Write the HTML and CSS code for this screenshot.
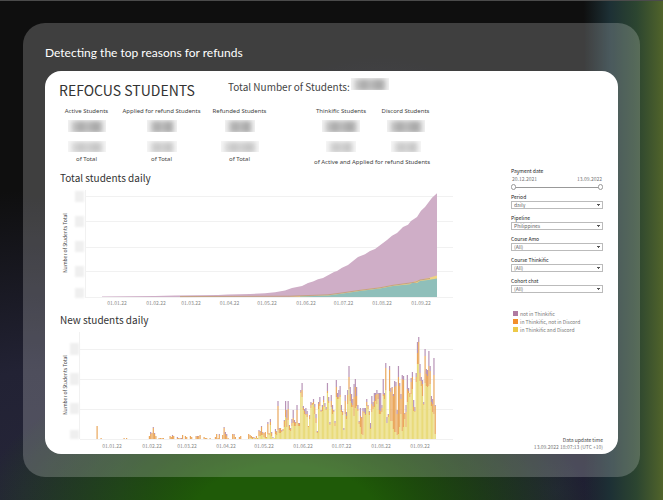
FILE: index.html
```html
<!DOCTYPE html>
<html lang="en">
<head>
<meta charset="utf-8">
<title>Detecting the top reasons for refunds</title>
<link rel="stylesheet" href="styles.css">
</head>
<body>
<main class="glass">
  <h1 class="caption">Detecting the top reasons for refunds</h1>
  <div class="card">
    <section class="report">
      <header class="head">
        <h2 class="name">REFOCUS STUDENTS</h2>
        <p class="total">Total Number of Students: <span class="mask mask-total"><i></i></span></p>
      </header>
      <div class="stats">
        <div class="stat"><h3>Active Students</h3><span class="mask wide"><i></i></span><span class="mask soft wide"><i></i></span><p>of Total</p></div>
        <div class="stat"><h3>Applied for refund Students</h3><span class="mask"><i></i></span><span class="mask soft"><i></i></span><p>of Total</p></div>
        <div class="stat"><h3>Refunded Students</h3><span class="mask"><i></i></span><span class="mask soft wide"><i></i></span><p>of Total</p></div>
        <div class="pair">
          <div class="stat"><h3>Thinkific Students</h3><span class="mask wide"><i></i></span><span class="mask soft"><i></i></span></div>
          <div class="stat"><h3>Discord Students</h3><span class="mask wide"><i></i></span><span class="mask soft"><i></i></span></div>
          <p>of Active and Applied for refund Students</p>
        </div>
      </div>
      <h3 class="chart-title">Total students daily</h3>
      <svg class="chart" viewBox="59 187 394 121" role="img" aria-label="Total students daily">
        <g class="smudge">
          <rect x="75" y="191" width="9" height="11"/><rect x="75" y="216" width="9" height="11"/><rect x="75" y="241" width="9" height="11"/><rect x="75" y="266" width="9" height="11"/><rect x="75" y="288" width="9" height="10"/>
        </g>
        <path class="grid" d="M85 196.500H453M85 221.500H453M85 247.500H453M85 271.500H453M85 297.500H453M85.500 190V297"/>
        <path class="area-not" d="M102 296.500L155 296L175 295.500L218 295L228 294.400L250 294L265 293.300L275 292.300L285 290.500L292 288L302 286L308 283L313 281.500L318 279.300L323 278L334 272L337 271L342 267.700L348 265L353 261L358 257L365 254.300L370 251L375 249L387 240L392 235.700L397 233L403 227L408 224.700L411 221L417 217L421 210.700L425 207L432 197.700L437 193.300V297H102Z"/>
        <path class="area-both" d="M290 296.500L328 295L343 293L360 290L380 287.500L393 285L410 283L416 281L420 280L430 277.500L437 275.500V297H290Z"/>
        <path class="edge" d="M180 296.600L290 296.200L328 294.800L343 292.800L360 290.300L380 287.800L393 285.300L410 283L416 282L420 280L430 278.500"/>
        <path class="area-teal" d="M300 296.500L328 295.500L343 293.500L360 291L380 288.500L393 286L410 284.300L412 283L417 283L420 281L428 280L437 278.500V297H300Z"/>
        <text class="axis" transform="translate(67 243) rotate(-90)">Number of Students Total</text>
        <g class="ticks">
          <text x="117" y="305">01.01.22</text><text x="156" y="305">01.02.22</text><text x="191" y="305">01.03.22</text><text x="229.500" y="305">01.04.22</text><text x="267" y="305">01.05.22</text><text x="306" y="305">01.06.22</text><text x="343.500" y="305">01.07.22</text><text x="382" y="305">01.08.22</text><text x="421" y="305">01.09.22</text>
        </g>
      </svg>
      <h3 class="chart-title">New students daily</h3>
      <svg class="chart" viewBox="59 329 394 121" role="img" aria-label="New students daily">
        <g class="smudge">
          <rect x="70" y="343" width="9" height="12"/><rect x="70" y="373" width="9" height="12"/><rect x="70" y="403" width="9" height="11"/><rect x="70" y="430" width="9" height="9"/>
        </g>
        <path class="grid" d="M80 349.500H453M80 379.500H453M80 409.500H453M80 439.500H453M79.500 332V439"/>
        <g id="bars"></g>
        <text class="axis" transform="translate(67 385) rotate(-90)">Number of Students Total</text>
        <g class="ticks">
          <text x="112" y="448">01.01.22</text><text x="152" y="448">01.02.22</text><text x="187" y="448">01.03.22</text><text x="226" y="448">01.04.22</text><text x="264" y="448">01.05.22</text><text x="303" y="448">01.06.22</text><text x="341.500" y="448">01.07.22</text><text x="381" y="448">01.08.22</text><text x="420" y="448">01.09.22</text>
        </g>
      </svg>
    </section>
    <aside class="side">
      <fieldset class="range">
        <legend>Payment date</legend>
        <div class="dates"><span>20.12.2021</span><span>13.09.2022</span></div>
        <div class="slider">
          <input type="range" min="0" max="267" value="0" aria-label="From date">
          <input type="range" min="0" max="267" value="267" aria-label="To date">
        </div>
      </fieldset>
      <div class="field"><label for="period">Period</label><select id="period"><option>daily</option></select></div>
      <div class="field"><label for="pipeline">Pipeline</label><select id="pipeline"><option>Philippines</option></select></div>
      <div class="field"><label for="amo">Course Amo</label><select id="amo"><option>(All)</option></select></div>
      <div class="field"><label for="thinkific">Course Thinkific</label><select id="thinkific"><option>(All)</option></select></div>
      <div class="field"><label for="cohort">Cohort chat</label><select id="cohort"><option>(All)</option></select></div>
      <ul class="legend">
        <li class="not">not in Thinkific</li>
        <li class="part">in Thinkific, not in Discord</li>
        <li class="both">in Thinkific and Discord</li>
      </ul>
      <footer class="updated"><b>Data update time</b><span>13.09.2022 18:07:13 (UTC +10)</span></footer>
    </aside>
  </div>
</main>
<script src="script.js"></script>
</body>
</html>
```
FILE: styles.css
```css
* { box-sizing: border-box; }
h1, h2, h3, p, ul, fieldset { margin: 0; padding: 0; border: 0; font-weight: 400; }
body {
  margin: 0;
  min-height: 100vh;
  padding: 22px 23px 23px;
  border-top: 1px solid #4b4b4b;
  border-bottom: 1px solid #77777c;
  font-family: "Noto Sans CJK SC", "Noto Sans", sans-serif;
  color: #444;
  background:
    linear-gradient(90deg, transparent 88%, #1d3035 92%, #2c4530 96%, #50632a 100%),
    radial-gradient(ellipse 46% 34% at 43% 103%, #1f5a08 0, #1f5a08 30%, transparent 100%),
    radial-gradient(ellipse 30% 38% at 84% 98%, #222238 0, transparent 100%),
    radial-gradient(ellipse 36% 60% at 4% 98%, #252538 0, #222234 40%, transparent 100%),
    radial-gradient(ellipse 28% 40% at 57% 50%, #232336 0, transparent 100%),
    #0f0f0f;
}
.glass {
  min-height: 453px;
  padding: 22px 22px 23px;
  border-radius: 22px;
  background: rgba(255, 255, 255, .2);
}
.caption {
  height: 26px;
  font: 400 12px/16px Lato, sans-serif;
  color: #fff;
}
.card {
  display: grid;
  grid-template-columns: 1fr 92px;
  column-gap: 58px;
  padding: 0 15px 0 14px;
  border-radius: 16px;
  background: #fff;
}
.report { padding-bottom: 1px; }
.head { display: grid; grid-template-columns: 169px 1fr; height: 36px; padding-top: 6px; }
.name { font-size: 14px; line-height: 26px; color: #333; white-space: nowrap; }
.total { display: flex; gap: 1px; font-size: 10px; line-height: 19px; white-space: nowrap; }
.mask { display: block; width: 30px; height: 12px; overflow: hidden; background: #f3f3f3; }
.mask i { display: block; height: 100%; margin: 1px 3px; background: linear-gradient(90deg, #d0d0d0, #aaa 30%, #bdbdbd 50%, #a6a6a6 80%, #c8c8c8); filter: blur(2px); }
.mask.wide { width: 38px; }
.mask.soft { height: 11px; margin-top: 9px; opacity: .65; }
.mask-total { width: 38px; margin-top: 1px; }
.stats { display: grid; grid-template-columns: 55px 95px 61px 130px; justify-content: start; height: 62px; }
.stat { display: flex; flex-direction: column; align-items: center; }
.stat h3, .stats p { font: 6px/9px "Noto Sans", sans-serif; white-space: nowrap; }
.stat h3 { height: 13px; }
.stat p { margin-top: 3px; }
.pair { display: grid; grid-template-columns: 54px 51px; column-gap: 12px; margin-left: 44px; align-content: start; }
.pair p { grid-column: 1 / -1; margin-top: 6px; }
.chart-title { height: 18px; font-size: 10px; line-height: 18px; color: #333; padding-left: 1px; }
.chart { display: block; width: 100%; margin-bottom: 3px; }
.grid { fill: none; stroke: #f1f1f1; stroke-width: 1; }
.smudge { fill: #efefef; filter: blur(1px); }
.area-not { fill: #cfaec7; }
.area-both { fill: #efd382; }
.area-teal { fill: #8fbfba; }
.edge { fill: none; stroke: #c5a184; stroke-width: 1; }
.axis { font-size: 5px; fill: #444; text-anchor: middle; }
.ticks { font-size: 5px; fill: #888; text-anchor: middle; }
.bar-not { fill: #b894b7; }
.bar-part { fill: #eaa75c; }
.bar-both { fill: #e9db7a; }
.side { display: flex; flex-direction: column; padding-top: 96px; font-size: 5px; line-height: 7px; color: #777; }
.range legend, .field label { display: block; padding: 0; height: 8px; line-height: 8px; color: #222; }
.dates { display: flex; justify-content: space-between; padding: 0 1px; line-height: 8px; }
.slider { position: relative; height: 7px; }
.slider::before { content: ""; display: block; height: 4px; margin: 0 4px; border-bottom: 1px solid #999; }
.slider input { position: absolute; inset: 0; width: 100%; height: 7px; margin: 0; appearance: none; background: none; pointer-events: none; }
.slider input::-webkit-slider-thumb { appearance: none; width: 5px; height: 6px; border: 1px solid #999; border-radius: 3px; background: #fff; pointer-events: auto; }
.field { height: 21px; padding-top: 3px; }
.field select {
  display: block;
  width: 100%;
  height: 8px;
  padding: 0 2px;
  border: 1px solid #bbb;
  border-radius: 0;
  appearance: none;
  font: 5px/6px "Noto Sans CJK SC", "Noto Sans", sans-serif;
  color: #666;
  background: linear-gradient(#555, #555) right 3px top 2px / 1px 2px no-repeat, linear-gradient(#555, #555) right 2px top 2px / 3px 1px no-repeat, #fff;
}
.legend { margin-top: 14px; padding-left: 2px; list-style: none; }
.legend li { display: flex; align-items: center; gap: 2px; height: 8px; white-space: nowrap; }
.legend li::before { content: ""; width: 5px; height: 5px; }
.not::before { background: #b07aa1; }
.part::before { background: #f28e2b; }
.both::before { background: #edc948; }
.updated { display: flex; flex-direction: column; align-items: flex-end; margin-top: auto; padding-bottom: 4px; white-space: nowrap; }
.updated b { font-weight: 400; color: #444; }
```
FILE: script.js
```js
// Each entry is one day: [all students, students in Thinkific, students in Thinkific and Discord].
const daily = [
[4,4,1],[3,3,1],[2,2,0],[2,1,1],[1,1,0],[3,3,1],[1,1,0],[9,8,3],[8,7,3],[13,12,4],[7,6,4],[6,6,2],[7,7,1],[2,2,1],[17,15,5],[6,6,4],[20,17,14],[7,6,3],[2,1,1],[1,1,1],
[10,8,5],[8,7,4],[38,33,9],[11,10,6],[11,11,6],[9,8,7],[10,10,8],[19,18,12],[38,29,22],[29,21,12],[38,30,19],[14,13,9],[11,10,8],[20,16,13],[29,21,16],[19,17,13],[17,16,13],[34,29,16],[16,16,13],[16,15,13],
[49,47,46],[56,49,42],[33,31,29],[30,28,25],[31,25,24],[28,25,22],[13,13,12],[24,23,20],[37,34,31],[36,36,34],[40,37,35],[35,32,25],[25,21,16],[8,7,6],[37,35,30],[42,37,33],[29,28,27],[34,32,28],[43,39,37],[36,33,32],
[32,30,29],[56,48,46],[42,38,36],[17,15,14],[44,38,32],[34,30,25],[29,28,27],[18,16,13],[59,52,42],[46,42,40],[49,42,40],[53,44,42],[34,29,27],[28,27,24],[11,9,9],[44,38,25],[27,23,20],[49,44,35],[73,62,50],[52,45,38],
[45,36,32],[40,34,32],[55,42,23],[60,52,31],[52,43,33],[34,30,28],[18,17,15],[31,23,12],[22,21,5],[31,28,4],[31,27,26],[31,25,24],[40,37,33],[34,33,30],[28,27,24],[16,11,10],[43,35,27],[37,33,30],[46,38,32],[46,44,38],
[49,45,35],[46,45,40],[46,29,25],[46,28,25],[34,31,27],[60,45,43],[46,44,40],[76,71,49],[22,16,16],[25,24,22],[73,69,48],[51,47,18],[52,51,18],[45,43,10],[58,52,7],[57,53,7],[29,25,4],[73,62,5],[56,53,12],[45,40,25],
[64,60,8],[63,59,12],[26,25,20],[34,27,12],[64,50,37],[51,48,46],[46,46,42],[61,57,45],[67,62,50],[39,32,28],[32,28,27],[66,62,57],[97,86,75],[102,97,75],[75,66,58],[62,58,53],[59,55,43],[37,35,34],[90,83,56],[70,65,53],
[69,63,52],[88,73,53],[73,68,55],[43,37,33],[40,35,27],[81,64,25],[34,33,5]
];
// Sparse early days: [x, all students, students in Thinkific].
const early = [
[97,13,13],[101,1,1],[124,1,1],[126.5,1,1],[149.3,3,3],[150.6,7,5],[151.9,6,6],[153.2,12,11],[154.5,6,5],[155.8,3,3],[159,1,1],[160.5,1,1],[162,1,1],[163.3,1,1],
[170,3,3],[171.2,2,2],[172.4,4,3],[173.6,3,3],[177.3,2,1],[178.6,1,1],[180,1,1],[181.3,1,0],[182.5,4,4],[185.3,3,3],[186.6,2,2],[190.3,3,3],[191.6,2,2],
[196,3,3],[197.3,3,2],[198.6,3,3],[200,4,4],[204,2,2],[205.3,1,1],[206.6,1,1],[210,1,1],[215.3,2,2],[216.6,5,5],[218,1,1],[219.2,5,4],[222.6,4,4],[224,12,11],[225.3,7,5],[226.6,5,3],[228,1,1],
[232.6,5,5],[234,5,4],[235.3,2,2],[239.3,2,2],[240.6,3,3],[248.6,5,5]
];
const BASE = 439, STEP = 1.268, START = 250;
const layer = document.getElementById("bars");
function rect(cls, x, from, to) {
  if (to <= from) return;
  const r = document.createElementNS("http://www.w3.org/2000/svg", "rect");
  r.setAttribute("class", cls);
  r.setAttribute("x", x);
  r.setAttribute("y", BASE - to);
  r.setAttribute("width", 1.2);
  r.setAttribute("height", to - from);
  layer.append(r);
}
function bar(x, all, part, both) {
  rect("bar-both", x, 0, both);
  rect("bar-part", x, both, part);
  rect("bar-not", x, part, all);
}
early.forEach(([x, all, part]) => bar(x - 0.5, all, part, 0));
daily.forEach(([all, part, both], i) => bar(START + i * STEP - 0.5, all, part, both));
```
